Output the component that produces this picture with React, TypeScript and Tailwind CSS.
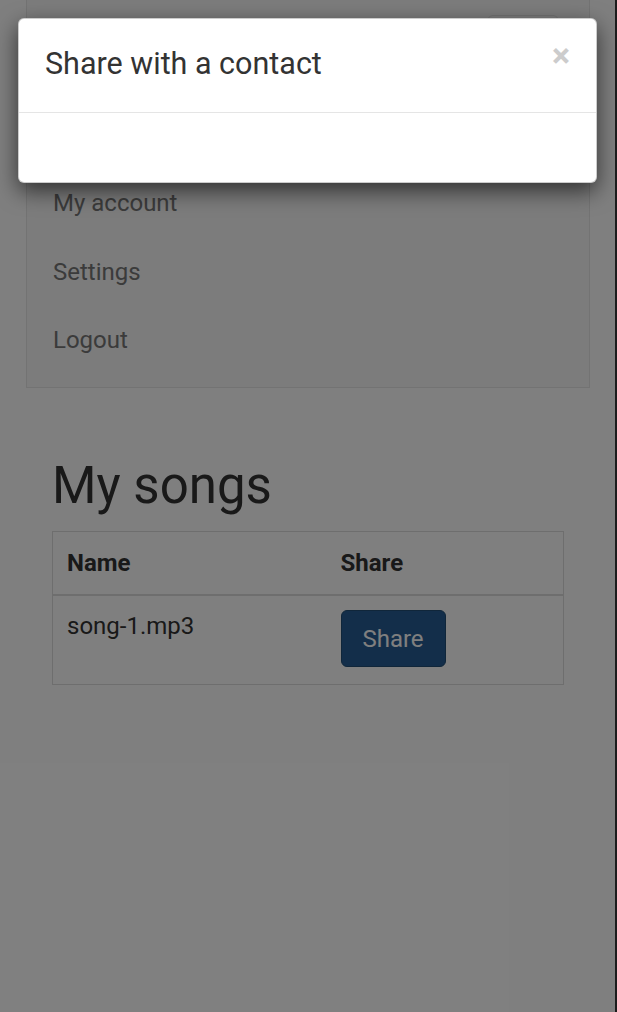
import React from "react";

const menu = ["My account", "Settings", "Logout"];

export default function App() {
  return (
    <div className="flex h-[1012px] w-full overflow-hidden bg-white font-['Roboto',_'Liberation_Sans',_sans-serif]">
      <div className="relative h-full flex-1 overflow-hidden">
        {/* page behind the modal */}
        <div className="ml-[26px] mr-[25px] border border-t-0 border-[#e7e7e7] bg-[#f8f8f8]">
          <div className="flex h-[169px] justify-end pr-[30px] pt-[15px]">
            <div className="h-[51px] w-[72px] rounded-[6px] border border-[#e2e2e2]" />
          </div>
          <ul className="pb-[12px]">
            {menu.map((item) => (
              <li key={item} className="flex h-[68.5px] items-center pl-[26px] text-[24px] text-[#777777]">
                {item}
              </li>
            ))}
          </ul>
        </div>

        <div className="ml-[52px] mr-[51px]">
          <h1 className="mt-[68px] text-[51px] leading-[59px] text-[#333333]">My songs</h1>
          <table className="mt-[16px] w-full border-collapse border border-[#dddddd] text-[24px] leading-[30px] text-[#333333]">
            <thead>
              <tr className="h-[64px] border-b-2 border-[#dddddd]">
                <th className="w-[274px] px-[14px] text-left font-bold">Name</th>
                <th className="px-[14px] text-left font-bold">Share</th>
              </tr>
            </thead>
            <tbody>
              <tr className="h-[89px]">
                <td className="px-[14px] pt-[15px] align-top">song-1.mp3</td>
                <td className="px-[14px] pt-[14px] align-top">
                  <button className="h-[57px] w-[105px] rounded-[6px] border border-[#204d74] bg-[#265c94] text-[24px] text-white">
                    Share
                  </button>
                </td>
              </tr>
            </tbody>
          </table>
        </div>

        {/* backdrop */}
        <div className="absolute inset-0 bg-black/50" />

        {/* modal */}
        <div className="absolute left-[18px] right-[18px] top-[18px] rounded-[6px] border border-black/20 bg-white shadow-[0_8px_22px_rgba(0,0,0,0.6)]">
          <div className="flex h-[94px] items-start justify-between border-b border-[#e5e5e5] pl-[26px] pr-[26px]">
            <h4 className="mt-[26px] text-[30.5px] leading-[38px] text-[#333333]">Share with a contact</h4>
            <span className="mt-[19px] text-[34px] font-bold leading-none text-[#cccccc]">×</span>
          </div>
          <div className="h-[69px]" />
        </div>
      </div>
      <div className="h-full w-[2px] bg-[#1c1c1c]" />
    </div>
  );
}
